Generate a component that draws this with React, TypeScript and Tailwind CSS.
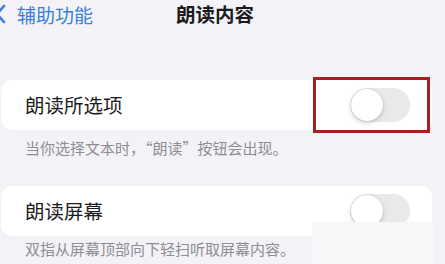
import React from "react";

const font = { fontFamily: '"Noto Sans CJK SC", "Noto Sans", sans-serif' };

function Toggle() {
  return (
    <div className="relative h-[34px] w-[60px] rounded-full bg-[#e9e9eb]">
      <div className="absolute left-[1px] top-[1px] h-[32px] w-[32px] rounded-full bg-white shadow-[0_2px_5px_rgba(0,0,0,0.18),0_0_1px_rgba(0,0,0,0.15)]" />
    </div>
  );
}

function Row({ label }: { label: string }) {
  return (
    <div className="ml-[1px] mr-[13px] flex h-[50px] items-center justify-between rounded-[11px] bg-white pl-[24px] pr-[22px]">
      <span className="text-[19.5px] leading-none text-[#1c1c1e]">{label}</span>
      <Toggle />
    </div>
  );
}

export default function App() {
  return (
    <div
      className="relative h-[264px] w-[445px] overflow-hidden bg-[#f2f2f7]"
      style={font}
    >
      <div className="flex h-[28px] items-center">
        <svg
          width="12"
          height="20"
          viewBox="0 0 12 20"
          className="ml-[-6px]"
          fill="none"
          stroke="#3a7fd8"
          strokeWidth="2.6"
          strokeLinecap="round"
          strokeLinejoin="round"
        >
          <path d="M10 2 L3 10 L10 18" />
        </svg>
        <span className="ml-[11px] text-[19px] leading-none text-[#3a7fd8]">
          辅助功能
        </span>
        <span className="ml-[83px] text-[19.5px] font-bold leading-none text-[#1c1c1e]">
          朗读内容
        </span>
      </div>

      <div className="mt-[52px]">
        <Row label="朗读所选项" />
        <p className="ml-[25px] mt-[9px] text-[15px] leading-[18px] text-[#8e8e93]">
          当你选择文本时，“朗读”按钮会出现。
        </p>
      </div>

      <div className="mt-[29px]">
        <Row label="朗读屏幕" />
        <p className="ml-[25px] mt-[4px] text-[15px] leading-[18px] text-[#8e8e93]">
          双指从屏幕顶部向下轻扫听取屏幕内容。
        </p>
      </div>

      <div className="absolute left-[313px] top-[77px] h-[56px] w-[117px] border-[3px] border-[#a3211f]" />
      <div className="absolute left-[312px] top-[222px] h-[42px] w-[121px] bg-[#f7f7f9]" />
    </div>
  );
}
